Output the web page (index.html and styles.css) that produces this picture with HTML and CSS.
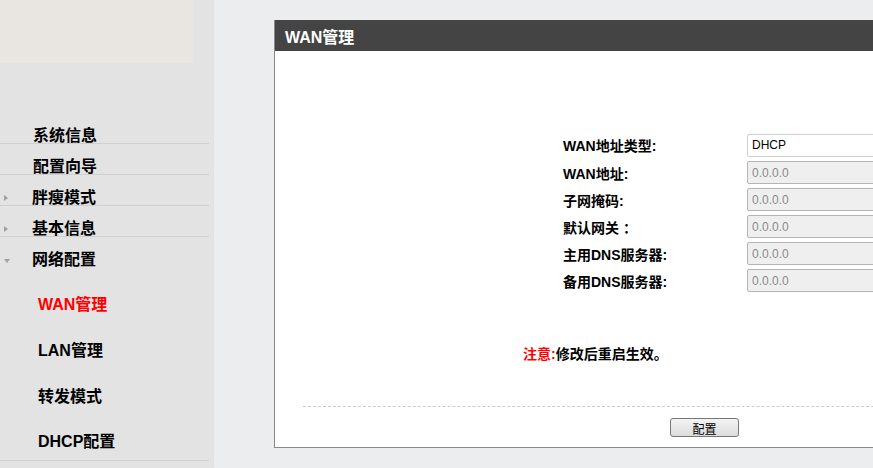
FILE: index.html
```html
<!DOCTYPE html>
<html lang="zh-CN">
<head>
<meta charset="utf-8">
<title>WAN管理</title>
<link rel="stylesheet" href="styles.css">
</head>
<body>
<div class="page">
  <aside class="sidebar">
    <div class="banner"></div>
    <ul class="nav">
      <li class="nav-item">系统信息</li>
      <li class="nav-item">配置向导</li>
      <li class="nav-item"><span class="arrow arrow-right"></span>胖瘦模式</li>
      <li class="nav-item"><span class="arrow arrow-right"></span>基本信息</li>
      <li class="nav-item nav-open"><span class="arrow arrow-down"></span>网络配置</li>
    </ul>
    <ul class="subnav">
      <li class="sub-item active">WAN管理</li>
      <li class="sub-item">LAN管理</li>
      <li class="sub-item sub-third">转发模式</li>
      <li class="sub-item sub-last">DHCP配置</li>
    </ul>
  </aside>
  <main class="main">
    <section class="panel">
      <header class="panel-head">WAN管理</header>
      <div class="panel-body">
        <div class="form">
          <div class="row row-first"><label class="label">WAN地址类型:</label><input class="field" type="text" value="DHCP"></div>
          <div class="row"><label class="label">WAN地址:</label><input class="field" type="text" value="0.0.0.0" disabled></div>
          <div class="row"><label class="label">子网掩码:</label><input class="field" type="text" value="0.0.0.0" disabled></div>
          <div class="row"><label class="label">默认网关 ：</label><input class="field" type="text" value="0.0.0.0" disabled></div>
          <div class="row"><label class="label">主用DNS服务器:</label><input class="field" type="text" value="0.0.0.0" disabled></div>
          <div class="row"><label class="label">备用DNS服务器:</label><input class="field" type="text" value="0.0.0.0" disabled></div>
        </div>
        <p class="note"><span class="note-mark">注意:</span>修改后重启生效。</p>
        <div class="divider"></div>
        <div class="actions"><button class="btn" type="button">配置</button></div>
      </div>
    </section>
  </main>
</div>
</body>
</html>
```
FILE: styles.css
```css
* { box-sizing: border-box; }
html, body { margin: 0; padding: 0; }
body {
  width: 873px;
  height: 468px;
  overflow: hidden;
  font-family: "Liberation Sans", "Noto Sans CJK SC", sans-serif;
  background: #ecedef;
}
.page {
  display: flex;
  height: 468px;
}
.sidebar {
  width: 214px;
  flex: none;
  background: #e3e3e3;
}
.banner {
  width: 193px;
  height: 63px;
  background: #e9e5e1;
}
.nav, .subnav {
  list-style: none;
  margin: 0;
  padding: 0;
  width: 209px;
}
.nav { margin-top: 50px; }
.nav-item {
  position: relative;
  height: 31px;
  padding-top: 15px;
  padding-left: 33px;
  line-height: 16px;
  font-size: 16px;
  font-weight: bold;
  color: #000;
  border-bottom: 1px solid #cfcfcf;
}
.nav-item:nth-child(3), .nav-item:nth-child(4), .nav-item.nav-open { padding-left: 32px; }
.nav-open { border-bottom: none; }
.arrow {
  position: absolute;
  left: 4px;
  width: 0;
  height: 0;
}
.arrow-right {
  top: 20px;
  border-top: 3px solid transparent;
  border-bottom: 3px solid transparent;
  border-left: 4px solid #a0a0a0;
}
.arrow-down {
  top: 22px;
  left: 4px;
  border-left: 3px solid transparent;
  border-right: 3px solid transparent;
  border-top: 4px solid #a0a0a0;
}
.subnav {
  padding-top: 14px;
  border-bottom: 1px solid #cfcfcf;
}
.sub-item {
  height: 46px;
  line-height: 16px;
  padding-top: 15px;
  padding-left: 38px;
  font-size: 16px;
  font-weight: bold;
  color: #000;
}
.sub-item.sub-third { height: 45px; }
.sub-item.sub-last { height: 41px; }
.sub-item.active { color: #ff0000; }

.main {
  flex: 1;
  min-width: 0;
  padding-top: 20px;
  padding-left: 60px;
  overflow: hidden;
}
.panel {
  width: 660px;
  height: 428px;
  background: #fff;
  border-left: 1px solid #888;
  border-bottom: 1px solid #888;
}
.panel-head {
  height: 31px;
  background: #444;
  color: #fff;
  font-size: 16px;
  font-weight: bold;
  line-height: 16px;
  padding-top: 10px;
  padding-left: 10px;
}
.panel-body {
  padding-top: 80px;
}
.form {
  padding-left: 288px;
}
.row {
  display: flex;
  align-items: center;
  height: 27px;
}
.row-first { height: 28px; }
.label {
  width: 184px;
  flex: none;
  font-size: 14px;
  font-weight: bold;
  color: #000;
}
.field {
  width: 160px;
  height: 23px;
  margin: 0;
  padding: 0 4px;
  font-family: "Liberation Sans", "Noto Sans CJK SC", sans-serif;
  font-size: 12px;
  color: #000;
  background: #fff;
  border: 1px solid #cfcfcf;
  border-radius: 2px;
  outline: none;
}
.field:disabled {
  background: #efefef;
  color: #8a8a8a;
  border-color: #b4b4b4;
}
.note {
  margin: 50px 0 0 248px;
  font-size: 14px;
  font-weight: bold;
  line-height: 20px;
  color: #000;
}
.note-mark { color: #ff0000; }
.divider {
  margin-top: 42px;
  margin-left: 28px;
  border-top: 1px dashed #cccccc;
}
.actions {
  padding-left: 395px;
  padding-top: 11px;
}
.btn {
  width: 69px;
  height: 19px;
  padding: 2px 0 0;
  font-family: "Noto Sans CJK SC", sans-serif;
  font-size: 12px;
  line-height: 14px;
  color: #000;
  background: linear-gradient(#f4f4f4, #dcdcdc);
  border: 1px solid #777;
  border-radius: 3px;
}
```
